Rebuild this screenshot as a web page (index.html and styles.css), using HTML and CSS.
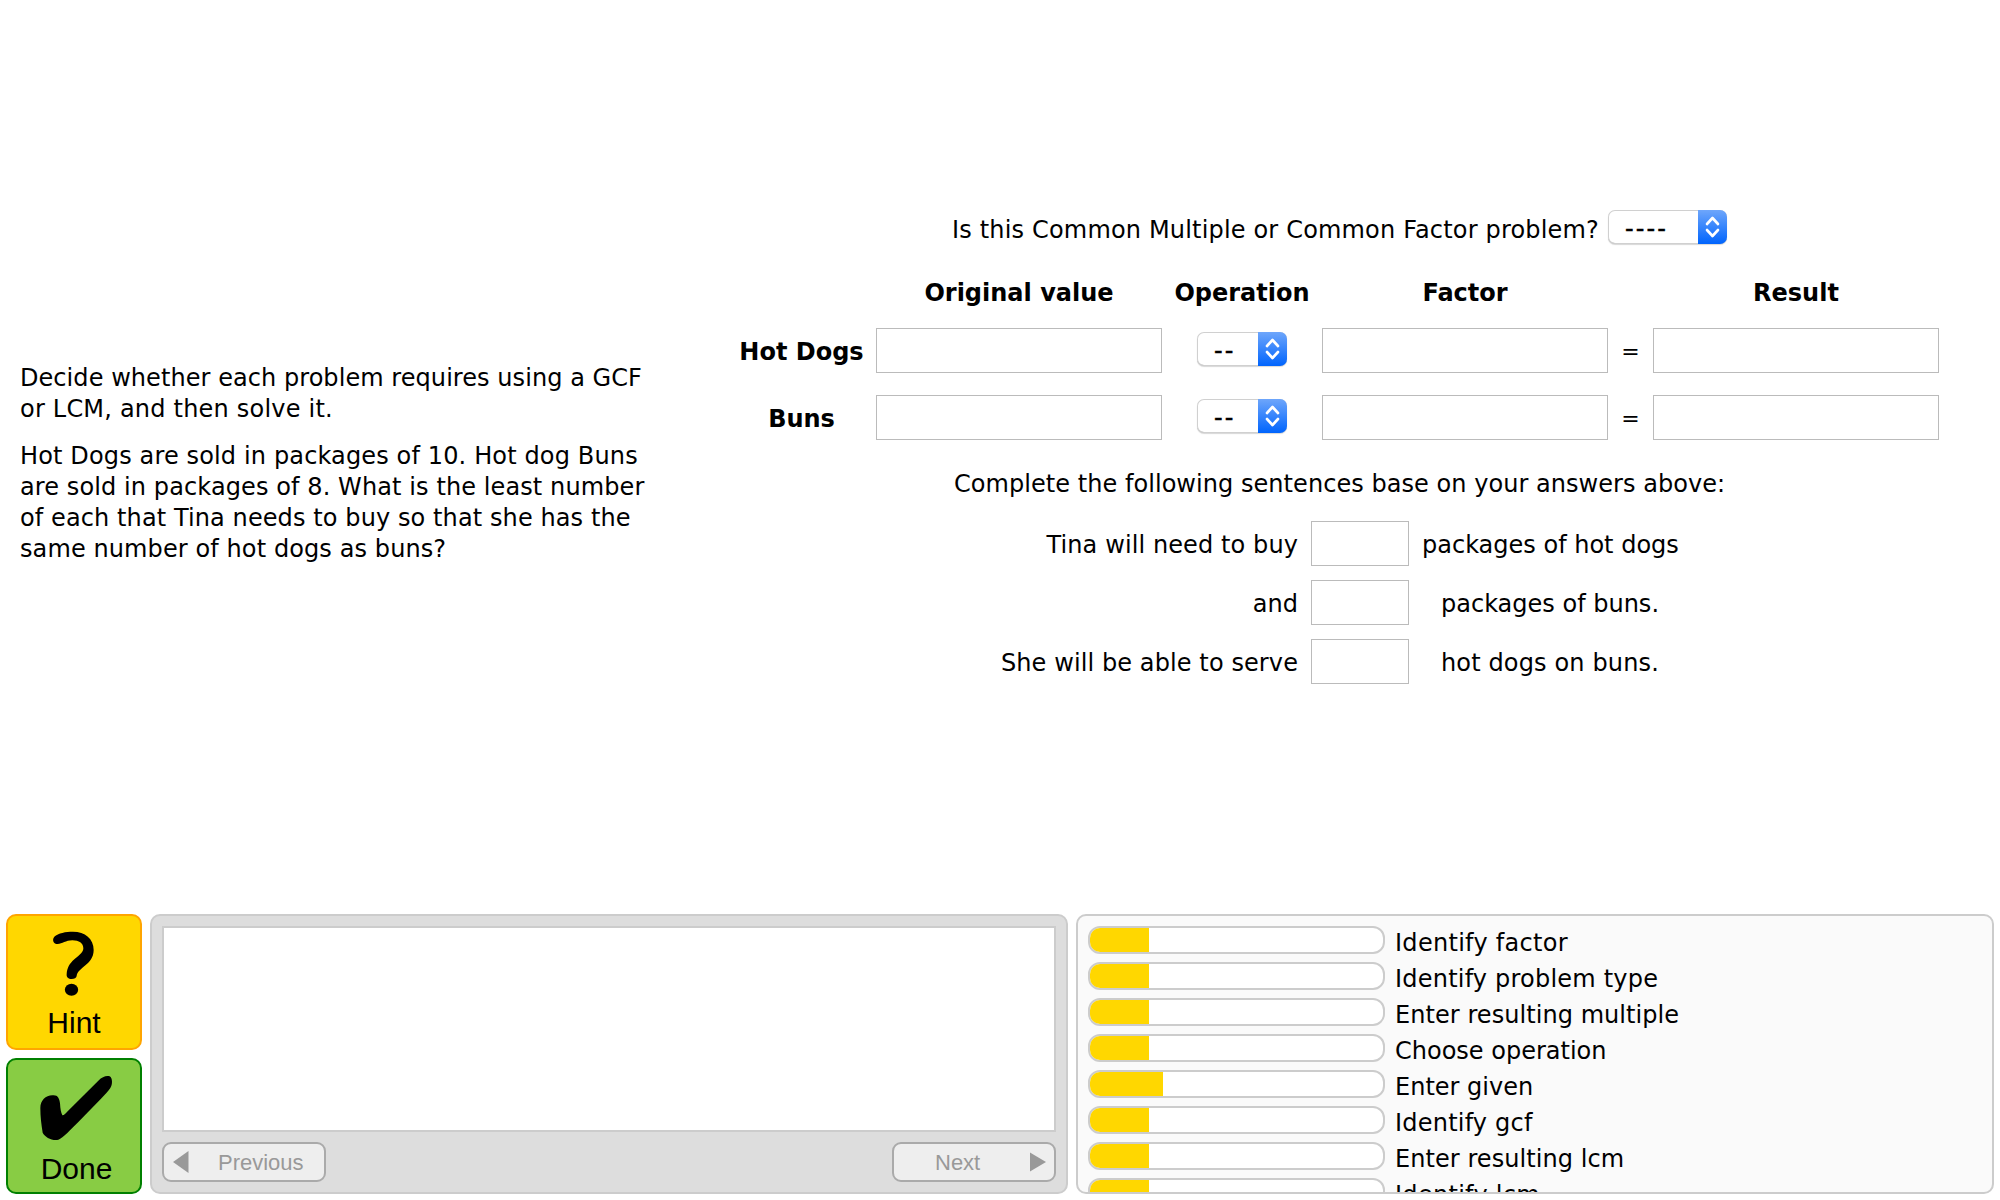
FILE: index.html
```html
<!DOCTYPE html>
<html lang="en">
<head>
<meta charset="utf-8">
<title>Common Multiple or Common Factor</title>
<link rel="stylesheet" href="styles.css">
</head>
<body>
<main class="tutor">
  <section class="problem">
    <p><span class="t1">Decide whether each problem requires using a GCF</span><br><span class="t4">or LCM, and then solve it.</span></p>
    <p><span class="t3">Hot Dogs are sold in packages of 10. Hot dog Buns</span><br><span class="t2">are sold in packages of 8. What is the least number</span><br><span class="t2">of each that Tina needs to buy so that she has the</span><br><span class="t2">same number of hot dogs as buns?</span></p>
  </section>
  <section class="work">
    <div class="question">
      <span class="question-text">Is this Common Multiple or Common Factor problem?</span>
      <div class="select wide"><span class="value">----</span><span class="arrows"><svg viewBox="0 0 29 34"><path d="M9 14l5.5-6 5.5 6M9 20l5.5 6 5.500-6"/></svg></span></div>
    </div>
    <div class="table">
      <b></b><b>Original value</b><b>Operation</b><b>Factor</b><b></b><b>Result</b>
      <b class="name">Hot Dogs</b><div class="input"></div>
      <div class="select"><span class="value">--</span><span class="arrows"><svg viewBox="0 0 29 34"><path d="M9 14l5.5-6 5.5 6M9 20l5.5 6 5.5-6"/></svg></span></div>
      <div class="input"></div><span class="equals">=</span><div class="input"></div>
      <b class="name">Buns</b><div class="input"></div>
      <div class="select"><span class="value">--</span><span class="arrows"><svg viewBox="0 0 29 34"><path d="M9 14l5.5-6 5.5 6M9 20l5.5 6 5.5-6"/></svg></span></div>
      <div class="input"></div><span class="equals">=</span><div class="input"></div>
    </div>
    <p class="complete">Complete the following sentences base on your answers above:</p>
    <div class="sentences">
      <span class="before t2">Tina will need to buy</span><div class="input"></div><span class="after">packages of hot dogs</span>
      <span class="before">and</span><div class="input"></div><span class="after indent">packages of buns.</span>
      <span class="before t2">She will be able to serve</span><div class="input"></div><span class="after indent t3">hot dogs on buns.</span>
    </div>
  </section>
</main>
<footer class="tools">
  <div class="buttons">
    <div class="button hint">
      <svg viewBox="21 18 396 270"><path d="M170 102C158 102 152 90 160 80C172 69 194 65 216 65C252 65 278 86 278 120C278 144 264 158 246 172C232 184 228 190 227 198C226 204 220 207 212 207C202 207 196 202 197 192C198 174 206 160 220 148C238 133 247 126 247 115C247 99 234 91 214 91C194 91 184 102 170 102Z"/><ellipse cx="211.500" cy="239.500" rx="20" ry="18"/></svg>
      <span>Hint</span>
    </div>
    <div class="button done">
      <svg viewBox="21 18 396 270"><path d="M118 162C118 140 134 124 154 124C170 122 175 132 177 148C178 166 180 176 184 184C190 184 194 178 200 172L292 80C304 68 316 64 326 67C335 72 335 92 328 102C322 112 310 124 300 134L232 204C210 226 186 252 172 257C154 261 132 250 125 236C121 210 118 190 118 162Z"/></svg>
      <span>Done</span>
    </div>
  </div>
  <div class="messages">
    <div class="message"></div>
    <div class="nav">
      <div class="nav-button previous"><svg viewBox="0 0 16 22"><path d="M0 11L15.500 0V22Z"/></svg><span>Previous</span></div>
      <div class="nav-button next"><span>Next</span><svg viewBox="0 0 16 22"><path d="M0 1.500L16 11L0 20.500Z"/></svg></div>
    </div>
  </div>
  <div class="skills">
    <div class="skill"><div class="bar"><i style="width:20.2%"></i></div><span class="t5">Identify factor</span></div>
    <div class="skill"><div class="bar"><i style="width:20.2%"></i></div><span class="t4">Identify problem type</span></div>
    <div class="skill"><div class="bar"><i style="width:20.2%"></i></div><span class="t1">Enter resulting multiple</span></div>
    <div class="skill"><div class="bar"><i style="width:20.2%"></i></div><span>Choose operation</span></div>
    <div class="skill"><div class="bar"><i style="width:25%"></i></div><span>Enter given</span></div>
    <div class="skill"><div class="bar"><i style="width:20.2%"></i></div><span class="t4">Identify gcf</span></div>
    <div class="skill"><div class="bar"><i style="width:20.2%"></i></div><span class="t1">Enter resulting lcm</span></div>
    <div class="skill"><div class="bar"><i style="width:20.2%"></i></div><span class="t5">Identify lcm</span></div>
  </div>
</footer>
</body>
</html>
```
FILE: styles.css
```css
* { box-sizing: border-box; }
body {
  margin: 0;
  height: 1200px;
  overflow: hidden;
  display: flex;
  flex-direction: column;
  background: #fff;
  color: #000;
  font: 24px/28px Verdana, "DejaVu Sans", sans-serif;
}
p { margin: 0; }
svg { display: block; }

/* letter spacing steps */
.t1 { letter-spacing: .06px; }
.t2 { letter-spacing: .1px; }
.t3 { letter-spacing: .14px; }
.t4 { letter-spacing: .21px; }
.t5 { letter-spacing: .29px; }

.tutor { display: flex; height: 914px; }
.problem {
  width: 727px;
  padding: 363px 0 0 20px;
  line-height: 31px;
  white-space: nowrap;
}
.problem p + p { margin-top: 16px; }
.work { width: 1212px; padding-top: 210px; }
.question {
  display: flex;
  height: 34px;
  padding-left: 225px;
  align-items: center;
  white-space: nowrap;
}
.question-text { width: 656px; padding-top: 5px; letter-spacing: .175px; }

.select {
  display: flex;
  width: 90px;
  height: 34px;
  border-radius: 7px;
  background: #fff;
  box-shadow: inset 0 0 0 1px #d0d0d0, inset 0 -1px 0 #b4b4b4, 0 1px 1px rgba(0,0,0,.16);
  overflow: hidden;
}
.select.wide { width: 119px; }
.value {
  flex: 1;
  padding: 5px 0 0 17px;
  letter-spacing: 2.1px;
  -webkit-text-stroke: .4px #000;
}
.arrows { width: 29px; background: linear-gradient(#6ea6fb, #0064fd); }
.arrows svg { width: 29px; height: 34px; fill: none; stroke: #fff; stroke-width: 2.6; stroke-linecap: round; stroke-linejoin: round; }

.table {
  display: grid;
  grid-template-columns: 149px 286px 160px 286px 45px 286px;
  grid-template-rows: 41px 67px 67px;
  margin-top: 32px;
  place-items: center;
}
.table > b { white-space: nowrap; padding-bottom: 8px; }
.table > .name { padding: 2px 0 0; }
.table .select { margin-top: -3px; }
.equals { padding-top: 2px; font-size: 22px; }
.input { width: 286px; height: 45px; border: 1px solid #bbb; background: #fff; }
.complete { margin: 19px 0 23px; padding-left: 227px; white-space: nowrap; letter-spacing: .05px; }
.sentences {
  display: grid;
  grid-template-columns: 571px 98px 400px;
  grid-auto-rows: 45px;
  column-gap: 13px;
  row-gap: 14px;
  align-items: center;
}
.sentences .input { width: 98px; }
.before { text-align: right; padding-top: 2px; }
.after { padding-top: 2px; }
.indent { margin-left: 19px; }

.tools { display: flex; height: 280px; padding-left: 6px; }
.buttons { display: flex; flex-direction: column; gap: 8px; width: 136px; margin-right: 8px; }
.button {
  width: 136px;
  height: 136px;
  border: 2px solid orange;
  border-radius: 10px;
  background: gold;
  text-align: center;
  font: 30px/34px "Liberation Sans", Arial, sans-serif;
}
.button svg { width: 132px; height: 90px; }
.button span { display: block; }
.done { border-color: green; background: #8c4; }
.done span { margin-top: 2px; padding-left: 5px; }

.messages {
  width: 918px;
  padding: 10px;
  border: 2px solid #ccc;
  border-radius: 10px;
  background: #ddd;
}
.message { height: 206px; border: 2px solid #ccc; background: #fff; }
.nav { display: flex; justify-content: space-between; margin-top: 10px; }
.nav-button {
  display: flex;
  width: 164px;
  height: 40px;
  border: 2px solid #aaa;
  border-radius: 9px;
  background: #eee;
  color: #999;
  align-items: center;
  font: 22px/26px "Liberation Sans", Arial, sans-serif;
}
.nav-button span { padding-top: 1px; }
.nav-button svg { width: 16px; height: 22px; fill: #999; }
.previous svg { margin-left: 9px; }
.previous span { margin-left: 29px; }
.next span { width: 95px; margin-left: 41px; }

.skills {
  width: 918px;
  margin-left: 8px;
  padding: 10px;
  border: 2px solid #ccc;
  border-radius: 10px;
  background: #fafafa;
  overflow: hidden;
}
.skill { display: flex; height: 36px; gap: 10px; }
.skill span { padding-top: 3px; white-space: nowrap; }
.bar {
  width: 297px;
  height: 28px;
  border: 2px solid #ccc;
  border-radius: 12px;
  background: #fff;
  overflow: hidden;
}
.bar i { display: block; height: 100%; background: gold; }
```
